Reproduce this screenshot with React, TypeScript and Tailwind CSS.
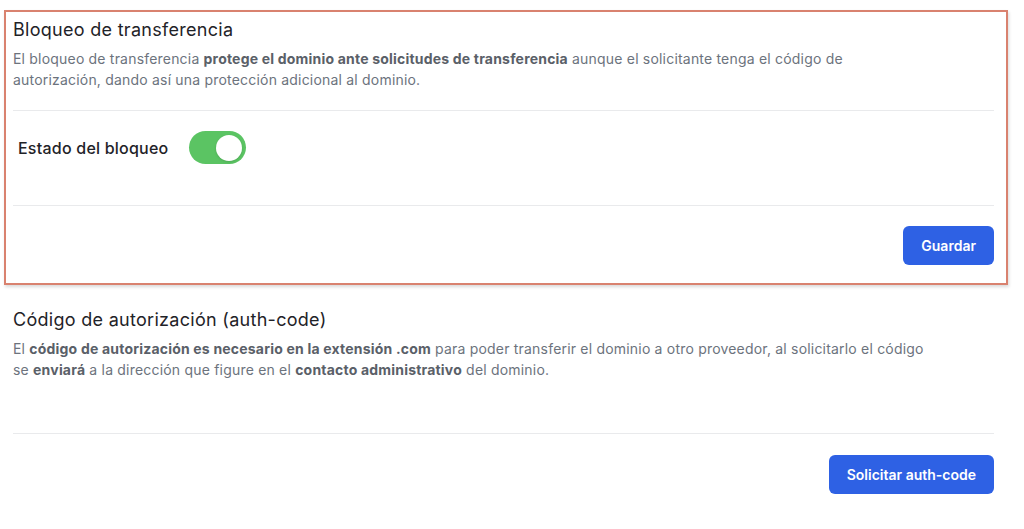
import { useState } from 'react';

function Toggle({ on, onChange }: { on: boolean; onChange: (v: boolean) => void }) {
  return (
    <button
      type="button"
      onClick={() => onChange(!on)}
      className={`flex h-[33px] w-[57px] items-center rounded-full px-[4px] transition-colors ${
        on ? 'justify-end bg-[#5bc463]' : 'justify-start bg-[#d1d5db]'
      }`}
    >
      <span className="h-[26px] w-[26px] rounded-full bg-white shadow-sm" />
    </button>
  );
}

function PrimaryButton({ children }: { children: React.ReactNode }) {
  return (
    <button
      type="button"
      className="h-[39px] rounded-md bg-[#2e61e4] px-[18px] text-[14px] font-semibold text-white"
    >
      {children}
    </button>
  );
}

export default function App() {
  const [locked, setLocked] = useState(true);

  return (
    <div className="min-h-screen bg-white pt-[10px] font-['Inter',sans-serif]">
      {/* Bloqueo de transferencia */}
      <section className="ml-[4px] w-[1004px] border-2 border-[#d9826f] pt-[4px] pb-[18px] pl-[7px] pr-[12px] shadow-[1px_2px_3px_rgba(0,0,0,0.15)]">
        <h2 className="text-[18px] leading-[28px] font-normal tracking-[0.016em] text-[#1f2328]">
          Bloqueo de transferencia
        </h2>
        <p className="mt-[4px] text-[14px] leading-[21px] tracking-[0.014em] text-[#6c737d]">
          El bloqueo de transferencia{' '}
          <b className="font-bold text-[#5a6068]">protege el dominio ante solicitudes de transferencia</b> aunque el
          solicitante tenga el código de
          <br />
          autorización, dando así una protección adicional al dominio.
        </p>
        <div className="mt-[20px] border-t border-[#e9eaec]" />
        <div className="flex items-center gap-[21px] pt-[20px] pb-[41px] pl-[5px]">
          <span className="text-[16px] font-medium tracking-[0.014em] text-[#1f2328]">Estado del bloqueo</span>
          <Toggle on={locked} onChange={setLocked} />
        </div>
        <div className="border-t border-[#e9eaec]" />
        <div className="flex justify-end pt-[20px]">
          <PrimaryButton>Guardar</PrimaryButton>
        </div>
      </section>

      {/* Código de autorización */}
      <section className="mt-[21px] w-[994px] pl-[13px]">
        <h2 className="text-[18px] leading-[28px] font-normal tracking-[0.016em] text-[#1f2328]">
          Código de autorización (auth-code)
        </h2>
        <p className="mt-[4px] text-[14px] leading-[21px] tracking-[0.014em] text-[#6c737d]">
          El <b className="font-bold text-[#5a6068]">código de autorización es necesario en la extensión .com</b> para
          poder transferir el dominio a otro proveedor, al solicitarlo el código
          <br />
          se <b className="font-bold text-[#5a6068]">enviará</b> a la dirección que figure en el{' '}
          <b className="font-bold text-[#5a6068]">contacto administrativo</b> del dominio.
        </p>
        <div className="mt-[53px] border-t border-[#e9eaec]" />
        <div className="flex justify-end pt-[21px]">
          <PrimaryButton>Solicitar auth-code</PrimaryButton>
        </div>
      </section>
    </div>
  );
}
